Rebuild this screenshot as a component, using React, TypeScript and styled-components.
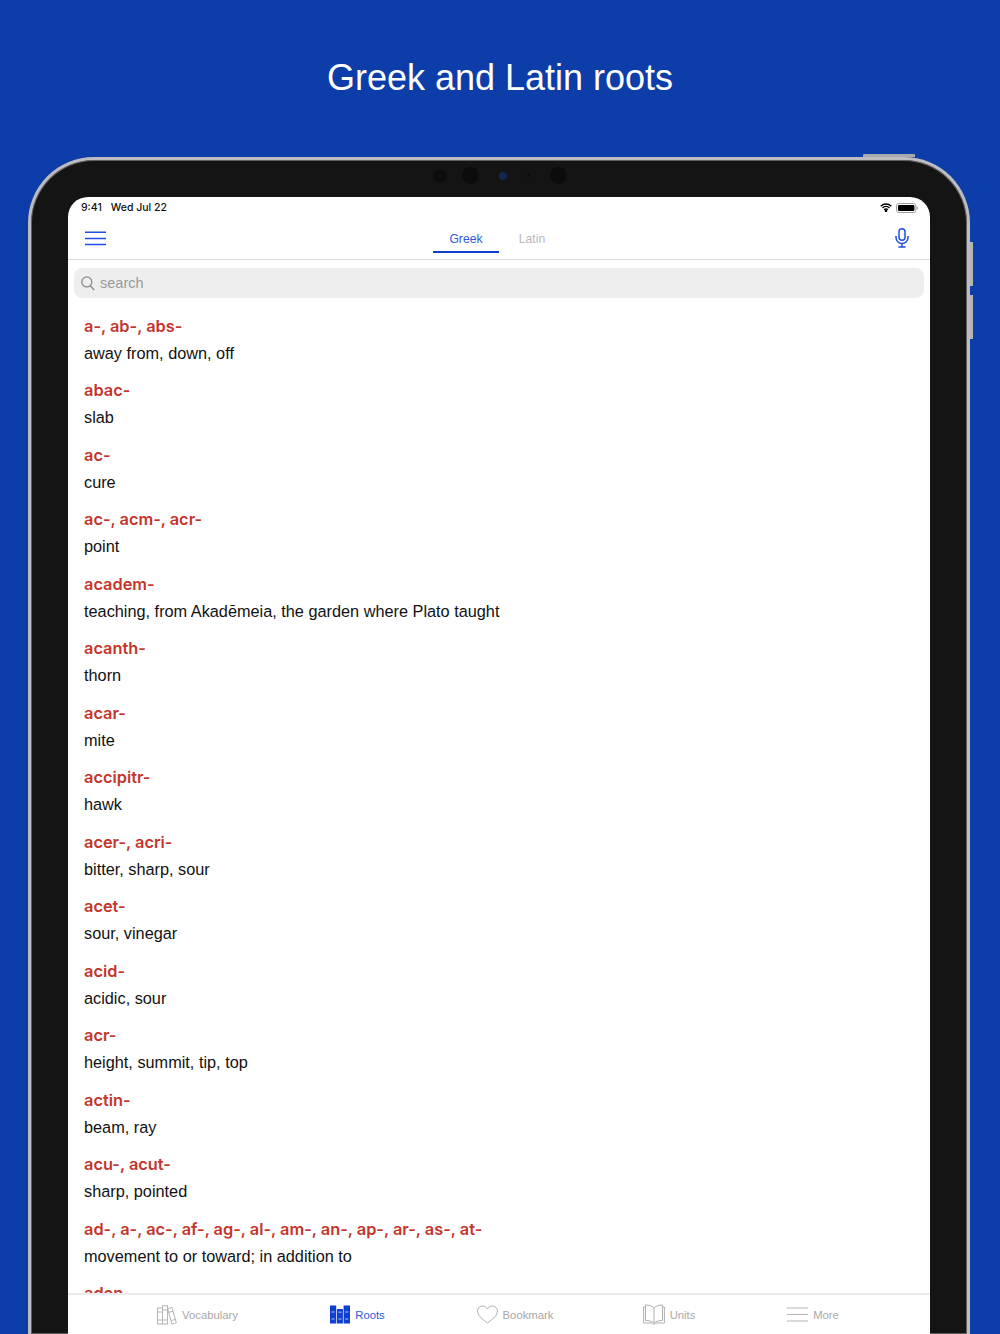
import React from "react";
import styled, { createGlobalStyle } from "styled-components";

const Global = createGlobalStyle`
  html, body { margin: 0; padding: 0; height: 1334px; overflow: hidden; background: #0d3da8; }
  #root { height: 1334px; }
  * { box-sizing: border-box; }
`;

const Page = styled.div`
  height: 1334px;
  background: #0d3da8;
  display: flex;
  flex-direction: column;
  overflow: hidden;
  font-family: "Liberation Sans", Arial, sans-serif;
`;

const Title = styled.h1`
  margin: 0;
  flex: none;
  height: 157px;
  padding-top: 56px;
  text-align: center;
  color: #fff;
  font: 400 36px/44px "Liberation Sans", Arial, sans-serif;
`;

const Device = styled.div`
  position: relative;
  flex: none;
  height: 1177px;
  margin: 0 30px 0 28px;
  padding: 37px 37px 0;
  background: #141414;
  border: 3px solid #bdbdc1;
  border-bottom: 0;
  border-radius: 66px 66px 0 0;
  box-shadow: inset 0 0 0 1px #5f5f62;
  display: flex;
`;

const TopButton = styled.div`
  position: absolute;
  top: -6px;
  right: 52px;
  width: 52px;
  height: 3px;
  background: #a9a9ad;
  border-radius: 1px 1px 0 0;
`;

const SideButton = styled.div<{ $top: number }>`
  position: absolute;
  top: ${(p) => p.$top}px;
  right: -6px;
  width: 3px;
  height: 44px;
  background: #b4b4b8;
`;

const Sensors = styled.div`
  position: absolute;
  top: 7px;
  left: 402px;
  display: flex;
  align-items: center;
`;

const Sensor = styled.div<{ $size: number; $gap: number; $color?: string }>`
  width: ${(p) => p.$size}px;
  height: ${(p) => p.$size}px;
  margin-right: ${(p) => p.$gap}px;
  border-radius: 50%;
  background: ${(p) => p.$color || "#0c0c0c"};
`;

const Screen = styled.div`
  flex: 1;
  min-width: 0;
  min-height: 0;
  background: #fff;
  border-radius: 20px 20px 0 0;
  display: flex;
  flex-direction: column;
  overflow: hidden;
`;

const StatusBar = styled.div`
  height: 21px;
  flex: none;
  padding: 0 12px 0 13px;
  display: flex;
  align-items: center;
  justify-content: space-between;
  color: #111;
  font-family: "Inter", "Liberation Sans", sans-serif;
  font-size: 10.5px;
  font-weight: 500;
`;

const StatusTime = styled.span`
  display: flex;
  gap: 9px;
`;

const StatusIcons = styled.div`
  display: flex;
  align-items: center;
  gap: 4px;
`;

const NavBar = styled.div`
  height: 42px;
  flex: none;
  position: relative;
  display: flex;
  align-items: center;
  justify-content: space-between;
  padding: 0 21px 1px 17px;
  border-bottom: 1px solid #dcdcdc;
`;

const Tabs = styled.div`
  position: absolute;
  left: 365px;
  top: 0;
  height: 35px;
  display: flex;
`;

const Tab = styled.div<{ $active?: boolean }>`
  width: 66px;
  height: 35px;
  padding-top: 8px;
  display: flex;
  align-items: center;
  justify-content: center;
  font-size: 12.2px;
  color: ${(p) => (p.$active ? "#2f5bd8" : "#b9b9b9")};
  border-bottom: 2px solid ${(p) => (p.$active ? "#0f3fd0" : "transparent")};
`;

const SearchBar = styled.div`
  flex: none;
  height: 30px;
  margin: 8px 6px 0;
  padding: 0 7px;
  display: flex;
  align-items: center;
  gap: 5px;
  background: #eeeeee;
  border-radius: 8px;
  color: #9a9a9a;
  font-size: 14.5px;
`;

const List = styled.div`
  flex: 1;
  min-height: 0;
  overflow: hidden;
  padding: 14.5px 16px 0;
`;

const Row = styled.div`
  height: 64.5px;
`;

const RootName = styled.div`
  height: 27px;
  line-height: 27px;
  font-family: "Inter", "Liberation Sans", sans-serif;
  font-size: 16.35px;
  font-weight: 600;
  color: #c5352c;
`;

const Meaning = styled.div`
  height: 27px;
  line-height: 27px;
  font-size: 16.3px;
  color: #111;
`;

const TabBar = styled.div`
  flex: none;
  height: 41px;
  border-top: 2px solid #ebebeb;
  display: flex;
  padding: 0 0 0 78px;
`;

const TabItem = styled.div<{ $active?: boolean; $width: number }>`
  width: ${(p) => p.$width}px;
  display: flex;
  align-items: center;
  justify-content: center;
  gap: 5px;
  font-size: 11.3px;
  color: ${(p) => (p.$active ? "#2f5bd8" : "#a8a8a8")};
`;

const entries: [string, string?][] = [
  ["a-, ab-, abs-", "away from, down, off"],
  ["abac-", "slab"],
  ["ac-", "cure"],
  ["ac-, acm-, acr-", "point"],
  ["academ-", "teaching, from Akadēmeia, the garden where Plato taught"],
  ["acanth-", "thorn"],
  ["acar-", "mite"],
  ["accipitr-", "hawk"],
  ["acer-, acri-", "bitter, sharp, sour"],
  ["acet-", "sour, vinegar"],
  ["acid-", "acidic, sour"],
  ["acr-", "height, summit, tip, top"],
  ["actin-", "beam, ray"],
  ["acu-, acut-", "sharp, pointed"],
  ["ad-, a-, ac-, af-, ag-, al-, am-, an-, ap-, ar-, as-, at-", "movement to or toward; in addition to"],
  ["aden-"],
];

const Menu = () => (
  <svg width="22" height="15" viewBox="0 0 22 15" fill="none" stroke="#1f4ee0" strokeWidth="1.5">
    <path d="M0 1.2h21M0 7.400h21M0 13.600h21" />
  </svg>
);

const Mic = () => (
  <svg width="14" height="20" viewBox="0 0 14 20" fill="none" stroke="#1f4ee0" strokeWidth="1.5">
    <rect x="4" y="0.8" width="6" height="11.4" rx="3" />
    <path d="M1 8v1.500a6 6 0 0 0 12 0V8M7 15.500v3.500M3.400 19h7.200" />
  </svg>
);

const Wifi = () => (
  <svg width="12" height="9" viewBox="0 0 12 9" fill="none" stroke="#000" strokeWidth="1.4">
    <path d="M.7 3.200a7.600 7.600 0 0 1 10.600 0M2.500 5a5 5 0 0 1 7 0M4.200 6.700a2.500 2.500 0 0 1 3.600 0" />
    <circle cx="6" cy="8" r=".6" fill="#000" />
  </svg>
);

const Battery = () => (
  <svg width="22" height="10" viewBox="0 0 22 10">
    <rect x=".5" y=".5" width="19.4" height="9" rx="2.4" fill="none" stroke="#9d9d9d" />
    <rect x="2" y="2" width="16.4" height="6" rx="1" fill="#000" />
    <rect x="20.6" y="3.4" width="1.2" height="3.2" rx=".6" fill="#9d9d9d" />
  </svg>
);

const SearchIcon = () => (
  <svg width="14" height="15" viewBox="0 0 14 15" fill="none" stroke="#8a8a8a" strokeWidth="1.3">
    <circle cx="5.8" cy="5.900" r="5" />
    <path d="M9.400 9.700l3.800 4.300" />
  </svg>
);

const BooksIcon = () => (
  <svg width="20" height="20" viewBox="0 0 20 20" fill="none" stroke="#b5b5b5" strokeWidth="1">
    <rect x=".5" y="3" width="5" height="16" />
    <rect x="5.5" y=".7" width="5" height="18.3" />
    <path d="M10.600 3.600l4.400-1.200 4.300 15.400-4.400 1.200zM.5 7h5M.5 15h5M5.500 5h5M5.500 15h5M11.600 7.400l4.400-1.200M14.200 15.600l4.200-1.200" />
  </svg>
);

const RootsIcon = () => (
  <svg width="20" height="19" viewBox="0 0 20 19">
    <path fill="#0f3fd0" d="M0 .5h6.200v18H0zM6.900 4h6v14.500h-6zM13.600 .5H20v18h-6.400z" />
    <path fill="none" stroke="#fff" strokeWidth=".7" d="M1.500 7h3M1.500 14h3M8.500 7.200h3M8.500 14h3M15.200 7h3M15.200 14h3" />
  </svg>
);

const HeartIcon = () => (
  <svg width="21" height="19" viewBox="0 0 21 19" fill="none" stroke="#b0b0b0" strokeWidth="1">
    <path d="M10.500 18C4.500 13.600.6 10.300.6 6A5 5 0 0 1 5.600 1c2.200 0 3.900 1 4.900 3 1-2 2.700-3 4.900-3a5 5 0 0 1 5 5c0 4.300-3.900 7.600-9.900 12z" />
  </svg>
);

const BookIcon = () => (
  <svg width="22" height="21" viewBox="0 0 22 21" fill="none" stroke="#b0b0b0" strokeWidth="1">
    <path d="M11 4C9 2 6 1 2.500 1v15.500c3.500 0 6.500.8 8.500 2.500 2-1.700 5-2.500 8.500-2.500V1C16 1 13 2 11 4zM11 4v15" />
    <path d="M2.500 3H.6v16H8c1 0 2 .6 3 1.300 1-.7 2-1.300 3-1.300h7.400V3h-1.900" />
  </svg>
);

const LinesIcon = () => (
  <svg width="21" height="15" viewBox="0 0 21 15" fill="none" stroke="#b5b5b5" strokeWidth="1">
    <path d="M0 1h21M0 7.500h21M0 14h21" />
  </svg>
);

export default function App() {
  return (
    <Page>
      <Global />
      <Title>Greek and Latin roots</Title>
      <Device>
        <TopButton />
        <SideButton $top={82} />
        <SideButton $top={135} />
        <Sensors>
          <Sensor $size={14} $gap={15} />
          <Sensor $size={17} $gap={20} />
          <Sensor $size={8} $gap={20} $color="#10284f" />
          <Sensor $size={3} $gap={20} />
          <Sensor $size={17} $gap={0} />
        </Sensors>
        <Screen>
          <StatusBar>
            <StatusTime>
              <span>9:41</span>
              <span>Wed Jul 22</span>
            </StatusTime>
            <StatusIcons>
              <Wifi />
              <Battery />
            </StatusIcons>
          </StatusBar>
          <NavBar>
            <Menu />
            <Tabs>
              <Tab $active>Greek</Tab>
              <Tab>Latin</Tab>
            </Tabs>
            <Mic />
          </NavBar>
          <SearchBar>
            <SearchIcon />
            search
          </SearchBar>
          <List>
            {entries.map(([name, meaning]) => (
              <Row key={name}>
                <RootName>{name}</RootName>
                {meaning && <Meaning>{meaning}</Meaning>}
              </Row>
            ))}
          </List>
          <TabBar>
            <TabItem $width={103}><BooksIcon />Vocabulary</TabItem>
            <TabItem $width={217} $active><RootsIcon />Roots</TabItem>
            <TabItem $width={98}><HeartIcon />Bookmark</TabItem>
            <TabItem $width={210}><BookIcon />Units</TabItem>
            <TabItem $width={78}><LinesIcon />More</TabItem>
          </TabBar>
        </Screen>
      </Device>
    </Page>
  );
}
